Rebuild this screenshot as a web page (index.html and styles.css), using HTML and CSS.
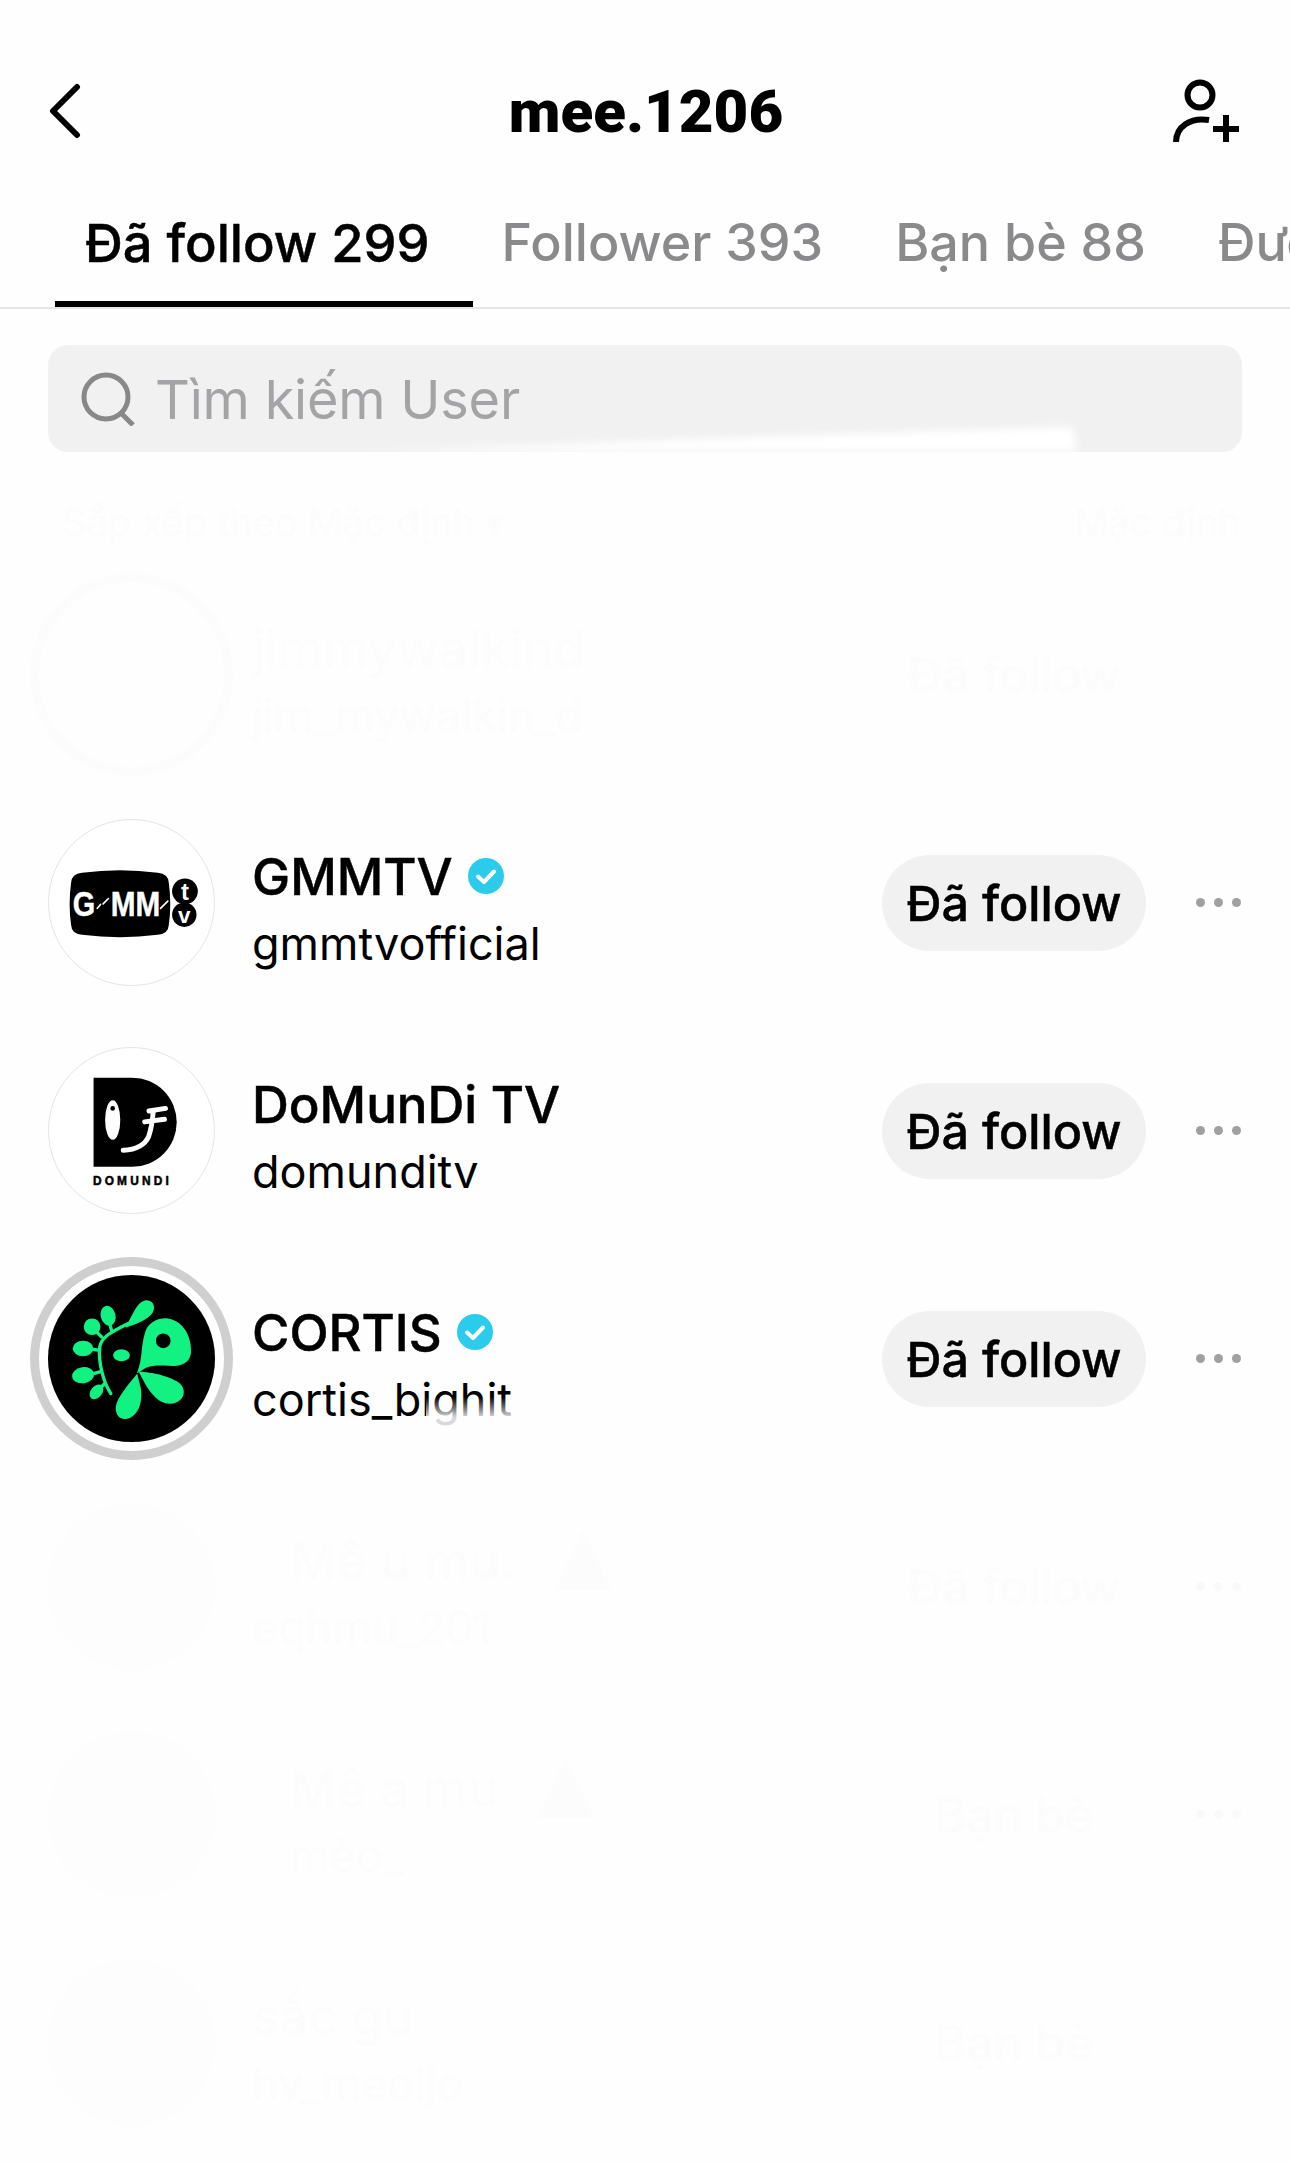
FILE: index.html
```html
<!DOCTYPE html>
<html lang="vi">
<head>
    <meta charset="UTF-8">
    <meta name="viewport" content="width=device-width, initial-scale=1.0">
    <title>mee.1206</title>
    <link rel="stylesheet" href="styles.css">
</head>
<body>

    <!-- Top bar -->
    <header class="top-bar">
        <svg class="back-icon" viewBox="0 0 34 56"><polyline points="29,4 5,28 29,52"/></svg>
        <h1 class="title">mee.1206</h1>
        <svg class="add-icon" viewBox="0 0 74 68">
            <circle cx="30" cy="18" r="12.5"/>
            <path d="M6 65 C6 50 20 40 39 43"/>
            <path d="M56 38 V65 M43 52 H69"/>
        </svg>
    </header>

    <!-- Tabs -->
    <nav class="tabs">
        <a class="tab tab-active">Đã follow 299</a>
        <a class="tab">Follower 393</a>
        <a class="tab">Bạn bè 88</a>
        <a class="tab">Được đề xuất</a>
    </nav>

    <!-- Search -->
    <div class="search">
        <svg class="search-icon" viewBox="0 0 54 54">
            <circle cx="25" cy="25" r="22"/>
            <path d="M40 41 L52 53"/>
        </svg>
        <span class="search-text">Tìm kiếm User</span>
        <svg class="search-smudge" viewBox="0 0 1193 107">
            <path d="M300 107 C 450 102 620 94 1024 82 L1029 107 Z"/>
        </svg>
    </div>

    <!-- Washed out sort row -->
    <div class="sort-row ghost">
        <span>Sắp xếp theo Mặc định ▾</span>
        <span>Mặc định</span>
    </div>

    <ul class="user-list">

        <li class="user ghost">
            <div class="avatar avatar-ghost avatar-ring"></div>
            <div class="info">
                <div class="name-line"><span class="name">jimmywalkind</span></div>
                <div class="handle">jim_mywalkin_d</div>
            </div>
            <div class="ghost-action ghost-action-end">Đã follow</div>
        </li>

        <li class="user">
            <div class="avatar avatar-line">
                <svg viewBox="0 0 500 500">
                    <path d="M67 190 Q68 164 100 160 Q215 144 330 160 Q362 164 363 190 Q372 255 363 318 Q362 344 330 348 Q215 362 100 348 Q68 344 67 318 Q58 255 67 190 Z" fill="#000"/>
                    <text class="logo-text logo-heavy" x="72" y="292" font-size="108" textLength="68" lengthAdjust="spacingAndGlyphs">G</text>
                    <text class="logo-text logo-heavy" x="187" y="292" font-size="108" textLength="150" lengthAdjust="spacingAndGlyphs">MM</text>
                    <path d="M146 268 L156 256 M164 254 L180 238 M338 268 L360 246" stroke="#fff" stroke-width="5" stroke-linecap="round"/>
                    <circle cx="412" cy="216" r="39" fill="#000"/>
                    <circle cx="410" cy="287" r="37" fill="#000"/>
                    <text class="logo-text" x="412" y="243" font-size="72" text-anchor="middle">t</text>
                    <text class="logo-text" x="410" y="311" font-size="68" text-anchor="middle">v</text>
                </svg>
            </div>
            <div class="info">
                <div class="name-line">
                    <span class="name">GMMTV</span>
                    <svg class="badge" viewBox="0 0 36 36"><circle cx="18" cy="18" r="18"/><polyline points="10,18.5 16,24 26,13.5"/></svg>
                </div>
                <div class="handle">gmmtvofficial</div>
            </div>
            <button class="follow-btn">Đã follow</button>
            <div class="dots"><i></i><i></i><i></i></div>
        </li>

        <li class="user">
            <div class="avatar avatar-line">
                <svg viewBox="0 0 500 500">
                    <path d="M135 90 H252 A135 135 0 0 1 252 360 H135 Z" fill="#000"/>
                    <ellipse cx="193" cy="218" rx="23" ry="60" fill="#fff"/>
                    <circle cx="193" cy="183" r="7" fill="#000"/>
                    <path d="M303 191 L353 183 M290 224 L350 216 M316 190 C314 220 310 245 302 268 C290 295 260 308 225 310" stroke="#fff" stroke-width="15" stroke-linecap="round" fill="none"/>
                    <text class="logo-text logo-dark" x="133" y="414" font-size="36" textLength="230">DOMUNDI</text>
                </svg>
            </div>
            <div class="info">
                <div class="name-line"><span class="name">DoMunDi TV</span></div>
                <div class="handle">domunditv</div>
            </div>
            <button class="follow-btn">Đã follow</button>
            <div class="dots"><i></i><i></i><i></i></div>
        </li>

        <li class="user">
            <div class="avatar avatar-ring">
                <svg viewBox="0 0 500 500">
                    <circle cx="250" cy="250" r="250" fill="#000"/>
                    <g fill="#12f283">
                        <path fill-rule="evenodd" d="M266 294 C285 250 276 215 292 168 C303 138 335 126 360 130 C408 138 432 190 428 234 C424 266 395 274 360 272 C335 270 315 270 295 277 C285 282 275 290 266 294 Z M345 175 A22 22 0 1 0 345.1 219 A22 22 0 1 0 345 175 Z"/>
                        <path d="M272 290 C310 290 370 305 395 325 C418 348 405 380 372 385 C335 390 305 360 272 290 Z"/>
                        <path d="M267 295 C240 330 203 370 203 400 C203 430 228 438 250 425 C278 408 282 370 278 340 Z"/>
                        <ellipse cx="220" cy="240" rx="25" ry="18"/>
                        <path d="M238 145 C255 115 268 80 290 76 C318 72 326 102 308 120 C288 140 260 148 232 158 Z"/>
                        <ellipse cx="180" cy="122" rx="22" ry="30" transform="rotate(-15 180 122)"/>
                        <circle cx="132" cy="155" r="25"/>
                        <ellipse cx="105" cy="220" rx="31" ry="23"/>
                        <ellipse cx="105" cy="300" rx="33" ry="24" transform="rotate(-8 105 300)"/>
                        <ellipse cx="145" cy="350" rx="17" ry="25" transform="rotate(40 145 350)"/>
                    </g>
                    <path d="M188 355 C165 320 150 260 155 215 C160 185 190 170 240 145 M190 165 L182 135 M160 185 L140 165 M150 225 L120 220 M155 290 L120 300 M170 325 L150 345" fill="none" stroke="#12f283" stroke-width="10" stroke-linecap="round"/>
                </svg>
            </div>
            <div class="info">
                <div class="name-line">
                    <span class="name">CORTIS</span>
                    <svg class="badge" viewBox="0 0 36 36"><circle cx="18" cy="18" r="18"/><polyline points="10,18.5 16,24 26,13.5"/></svg>
                </div>
                <div class="handle handle-fade">cortis_bighit</div>
            </div>
            <button class="follow-btn">Đã follow</button>
            <div class="dots"><i></i><i></i><i></i></div>
        </li>

        <li class="user ghost">
            <div class="avatar avatar-ghost"></div>
            <div class="info">
                <div class="name-line name-indent"><span class="name">Mê u mu.</span><span class="ghost-tag"></span></div>
                <div class="handle">eqhmu_201</div>
            </div>
            <div class="ghost-action">Đã follow</div>
            <div class="dots"><i></i><i></i><i></i></div>
        </li>

        <li class="user ghost">
            <div class="avatar avatar-ghost"></div>
            <div class="info">
                <div class="name-line name-indent"><span class="name">Mê a mu</span><span class="ghost-tag"></span></div>
                <div class="handle name-indent">mèo_</div>
            </div>
            <div class="ghost-action">Bạn bè</div>
            <div class="dots"><i></i><i></i><i></i></div>
        </li>

        <li class="user ghost">
            <div class="avatar avatar-ghost"></div>
            <div class="info">
                <div class="name-line"><span class="name">sắc gu</span></div>
                <div class="handle">hv_meoljo</div>
            </div>
            <div class="ghost-action ghost-action-end">Bạn bè</div>
        </li>

    </ul>

</body>
</html>
```

FILE: styles.css
```css
* {
    box-sizing: border-box;
}
body {
    margin: 0;
    height: 2164px;
    overflow: hidden;
    background-color: #fefefe;
    color: #000;
    font-family: 'Inter', 'Noto Sans', sans-serif;
}

/* Top bar */
.top-bar {
    display: grid;
    grid-template-columns: 1fr auto 1fr;
    align-items: center;
    height: 210px;
    padding: 12px 46px 0 48px;
}
.title {
    margin: 0;
    font-family: 'Roboto', sans-serif;
    font-size: 60px;
    font-weight: 900;
}
.back-icon {
    width: 34px;
    height: 56px;
    fill: none;
    stroke: #000;
    stroke-width: 6;
    stroke-linecap: round;
    stroke-linejoin: round;
}
.add-icon {
    justify-self: end;
    width: 74px;
    height: 68px;
    fill: none;
    stroke: #000;
    stroke-width: 6;
}

/* Tabs */
.tabs {
    display: flex;
    gap: 72px;
    height: 99px;
    padding-left: 85px;
    border-bottom: 2px solid #e6e6e6;
    overflow: hidden;
    white-space: nowrap;
}
.tab {
    position: relative;
    height: 99px;
    font-size: 52px;
    font-weight: 500;
    line-height: 66px;
    color: #8a8a8c;
}
.tab-active {
    color: #000;
    font-size: 52.4px;
    -webkit-text-stroke: 0.5px #000;
}
.tab-active::after {
    content: '';
    position: absolute;
    left: -30px;
    right: -43px;
    bottom: 2px;
    height: 6px;
    background-color: #000;
}

/* Search */
.search {
    position: relative;
    display: flex;
    align-items: center;
    gap: 20px;
    height: 107px;
    margin: 36px 48px 0;
    padding-left: 33px;
    background-color: #f1f1f2;
    border-radius: 20px;
}
.search-icon {
    width: 54px;
    height: 54px;
    fill: none;
    stroke: #888;
    stroke-width: 5;
}
.search-text {
    padding-top: 2px;
    font-size: 54px;
    letter-spacing: -0.2px;
    color: #a4a4a6;
}
.search-smudge {
    position: absolute;
    left: 0;
    top: 0;
    width: 100%;
    height: 100%;
    fill: #fff;
    filter: blur(4px);
}

/* Washed out parts of the screenshot */
.ghost {
    color: #fcfcfc;
}
.sort-row {
    display: flex;
    align-items: center;
    justify-content: space-between;
    height: 108px;
    padding: 32px 49px 0 62px;
    font-size: 38px;
}
.avatar-ghost {
    background-color: #fdfdfd;
}
.ghost .name,
.ghost .handle {
    color: #fcfcfc;
    -webkit-text-stroke: 0;
}
.ghost .dots i {
    background-color: #f9f9f9;
}
.ghost-action {
    width: 264px;
    margin-right: 50px;
    text-align: center;
    font-size: 48px;
    font-weight: 500;
}
.ghost-action-end {
    margin-right: 95px;
}
.name-indent {
    padding-left: 38px;
}
.ghost-tag {
    width: 56px;
    height: 60px;
    margin-left: 24px;
    background-color: #fcfcfc;
    clip-path: polygon(50% 0, 100% 100%, 0 100%);
}

/* User rows */
.user-list {
    margin: 0;
    padding: 0;
    list-style: none;
}
.user {
    display: flex;
    align-items: center;
    height: 228px;
    padding: 0 49px 0 48px;
}
.avatar {
    flex: none;
    width: 167px;
    height: 167px;
    border-radius: 50%;
}
.avatar svg {
    display: block;
    width: 100%;
    height: 100%;
}
.avatar-line {
    border: 1px solid #e4e4e4;
    background-color: #fff;
}
.avatar-ring {
    box-shadow: 0 0 0 9px #fff, 0 0 0 18px #cfcfcf;
}
.ghost .avatar-ring {
    box-shadow: 0 0 0 9px #fefefe, 0 0 0 18px #fcfcfc;
    background-color: #fefefe;
}
.logo-text {
    font-family: 'Liberation Sans', sans-serif;
    font-weight: 700;
    fill: #fff;
}
.logo-heavy {
    stroke: #fff;
    stroke-width: 1.5;
}
.logo-dark {
    fill: #000;
    stroke: #000;
    stroke-width: 1.5;
}
.info {
    flex: 1;
    min-width: 0;
    margin-left: 37px;
    padding-top: 13px;
}
.name-line {
    display: flex;
    align-items: center;
    gap: 15px;
    height: 65px;
}
.name {
    font-size: 51px;
    font-weight: 500;
    white-space: nowrap;
    -webkit-text-stroke: 0.5px #000;
}
.badge {
    width: 36px;
    height: 36px;
    fill: #2bcbec;
}
.badge polyline {
    fill: none;
    stroke: #fff;
    stroke-width: 4;
    stroke-linecap: round;
    stroke-linejoin: round;
}
.handle {
    height: 65px;
    font-size: 45px;
    line-height: 70px;
    white-space: nowrap;
}
.handle-fade {
    position: relative;
    width: 262px;
}
.handle-fade::after {
    content: '';
    position: absolute;
    left: 174px;
    right: 0;
    top: 32px;
    height: 34px;
    background: linear-gradient(rgba(254, 254, 254, 0), rgba(254, 254, 254, 0.85) 60%);
}
.follow-btn {
    width: 264px;
    height: 96px;
    margin-top: 2px;
    margin-right: 50px;
    padding: 0;
    border: none;
    border-radius: 48px;
    background-color: #f1f1f2;
    color: #000;
    font-family: inherit;
    font-size: 48.5px;
    font-weight: 500;
    -webkit-text-stroke: 0.5px #000;
}
.dots {
    display: flex;
    gap: 9px;
}
.dots i {
    width: 9px;
    height: 9px;
    border-radius: 50%;
    background-color: #a0a0a2;
}
```
